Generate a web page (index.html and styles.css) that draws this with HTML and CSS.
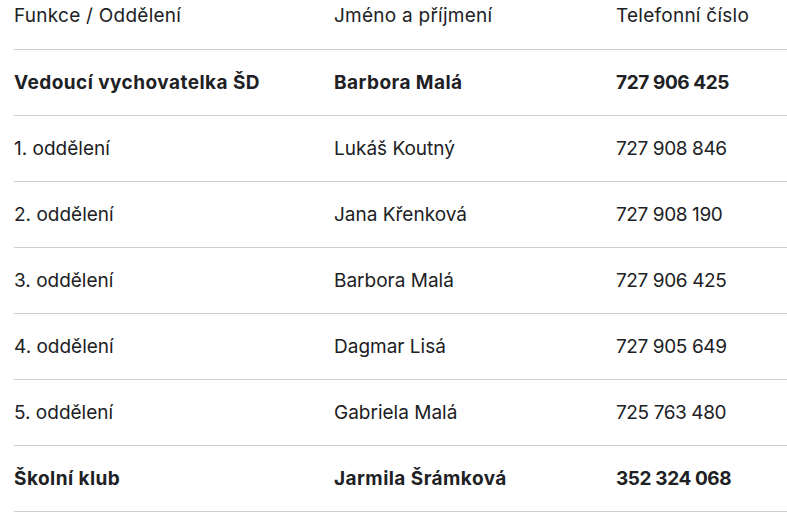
FILE: index.html
```html
<!DOCTYPE html>
<html lang="cs">
<head>
<meta charset="utf-8">
<link rel="stylesheet" href="styles.css">
</head>
<body>
<div class="wrap">
<table class="contacts">
<thead>
<tr><th class="c1">Funkce / Oddělení</th><th class="c2">Jméno a příjmení</th><th class="c3">Telefonní číslo</th></tr>
</thead>
<tbody>
<tr class="bold"><td>Vedoucí vychovatelka ŠD</td><td>Barbora Malá</td><td class="tel">727 906 425</td></tr>
<tr><td>1. oddělení</td><td>Lukáš Koutný</td><td class="tel">727 908 846</td></tr>
<tr><td>2. oddělení</td><td>Jana Křenková</td><td class="tel">727 908 190</td></tr>
<tr><td>3. oddělení</td><td>Barbora Malá</td><td class="tel">727 906 425</td></tr>
<tr><td>4. oddělení</td><td>Dagmar Lisá</td><td class="tel">727 905 649</td></tr>
<tr><td>5. oddělení</td><td>Gabriela Malá</td><td class="tel">725 763 480</td></tr>
<tr class="bold"><td>Školní klub</td><td>Jarmila Šrámková</td><td class="tel">352 324 068</td></tr>
</tbody>
</table>
</div>
</body>
</html>
```
FILE: styles.css
```css
html, body {
  margin: 0;
  padding: 0;
  background: #ffffff;
}
body {
  font-family: Inter, "Open Sans", "Liberation Sans", sans-serif;
  color: #202124;
  font-size: 19px;
}
.wrap {
  padding-left: 14px;
}
.contacts {
  border-collapse: collapse;
  width: 773px;
  table-layout: fixed;
}
.contacts th,
.contacts td {
  text-align: left;
  padding: 0;
  border-bottom: 1px solid #cfcfcf;
  font-weight: 400;
  white-space: nowrap;
}
.contacts th {
  height: 49px;
  vertical-align: top;
  line-height: 32px;
  letter-spacing: 0.25px;
}
.contacts td {
  height: 65px;
  vertical-align: middle;
  line-height: 24px;
  letter-spacing: 0;
}
.c1 { width: 320px; }
.c2 { width: 282px; }
.bold td {
  font-weight: 700;
  letter-spacing: 0.45px;
}
.contacts td.tel {
  letter-spacing: -0.4px;
}
```
